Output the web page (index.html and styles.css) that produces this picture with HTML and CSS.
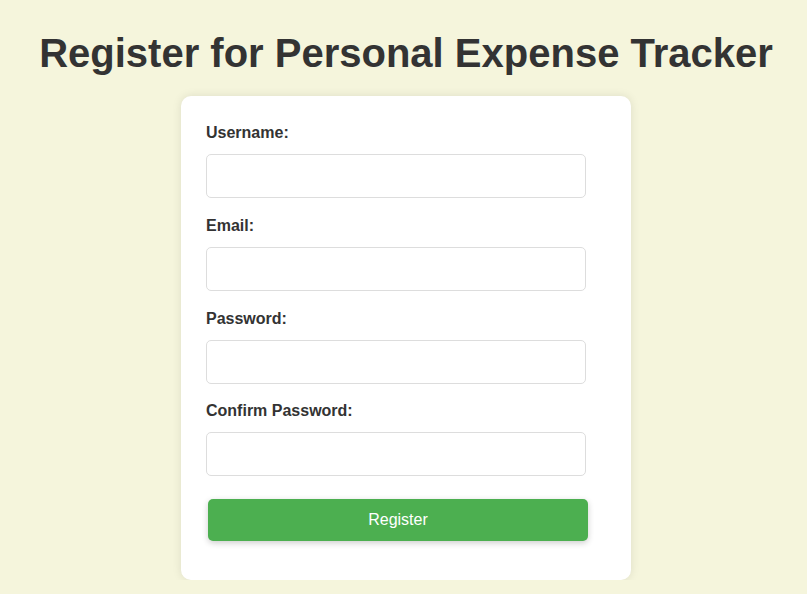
FILE: index.html
```html
<!DOCTYPE html>
<html lang="en">
<head>
<meta charset="utf-8">
<title>Register for Personal Expense Tracker</title>
<link rel="stylesheet" href="styles.css">
</head>
<body>
<h1 class="title">Register for Personal Expense Tracker</h1>
<form class="card">
  <div class="field">
    <label class="label" for="username">Username:</label>
    <input class="input" id="username" type="text">
  </div>
  <div class="field">
    <label class="label" for="email">Email:</label>
    <input class="input" id="email" type="email">
  </div>
  <div class="field">
    <label class="label" for="password">Password:</label>
    <input class="input" id="password" type="password">
  </div>
  <div class="field">
    <label class="label" for="confirm">Confirm Password:</label>
    <input class="input" id="confirm" type="password">
  </div>
  <button class="button" type="button">Register</button>
</form>
</body>
</html>
```
FILE: styles.css
```css
html, body {
  margin: 0;
  padding: 0;
}
body {
  background: #f5f5dc;
  font-family: "Liberation Sans", Arial, sans-serif;
  color: #333;
  padding: 30px 0 0 5px;
  display: flex;
  flex-direction: column;
  align-items: center;
}
.title {
  margin: 0 0 20px 0;
  font-size: 40px;
  font-weight: bold;
  color: #333;
  text-align: center;
  line-height: 46px;
}
.card {
  width: 450px;
  box-sizing: border-box;
  background: #fff;
  border-radius: 10px;
  box-shadow: 0 0 10px rgba(0, 0, 0, 0.1);
  padding: 28px 25px 39px 25px;
  display: flex;
  flex-direction: column;
}
.field {
  display: flex;
  flex-direction: column;
  margin-bottom: 19px;
}
.field:nth-of-type(3) {
  margin-bottom: 18px;
}
.field:last-of-type {
  margin-bottom: 23px;
}
.label {
  font-size: 16px;
  font-weight: bold;
  line-height: 18px;
  margin-bottom: 12px;
  color: #333;
}
.input {
  width: 380px;
  height: 44px;
  box-sizing: border-box;
  border: 1px solid #ddd;
  border-radius: 5px;
  padding: 10px;
  font-size: 16px;
  font-family: inherit;
  background: #fff;
}
.button {
  width: 380px;
  height: 42px;
  margin-left: 2px;
  background: #4caf50;
  color: #fff;
  border: none;
  border-radius: 5px;
  font-family: inherit;
  font-size: 16px;
  box-shadow: 0 2px 6px rgba(0, 0, 0, 0.2);
  cursor: pointer;
}
```
